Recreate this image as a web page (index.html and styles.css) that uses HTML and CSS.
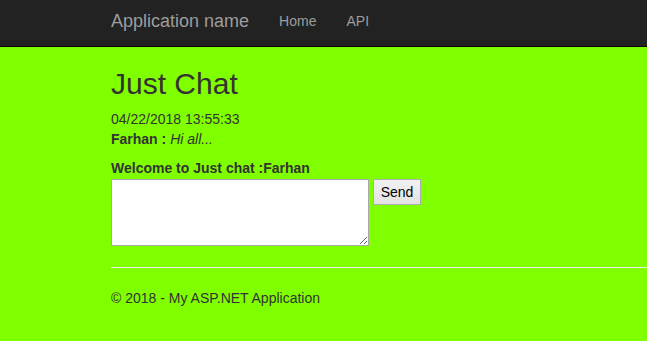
FILE: index.html
```html
<!DOCTYPE html>
<html>
<head>
  <meta charset="utf-8">
  <title>Just Chat - My ASP.NET Application</title>
  <link rel="stylesheet" href="styles.css">
</head>
<body>
  <div class="navbar">
    <div class="container nav-inner">
      <a class="brand" href="#">Application name</a>
      <ul class="nav">
        <li><a href="#">Home</a></li>
        <li><a href="#">API</a></li>
      </ul>
    </div>
  </div>

  <div class="container body-content">
    <h2>Just Chat</h2>

    <div class="messages">
      <div>04/22/2018 13:55:33</div>
      <div><strong>Farhan : </strong><em>Hi all...</em></div>
    </div>

    <div class="compose">
      <label class="welcome">Welcome to Just chat :Farhan</label>
      <div class="compose-row">
        <textarea id="message"></textarea>
        <button id="sendBtn" type="button">Send</button>
      </div>
    </div>

    <hr>
    <footer>
      <p>&copy; 2018 - My ASP.NET Application</p>
    </footer>
  </div>
</body>
</html>
```

FILE: styles.css
```css
body {
  margin: 0;
  padding: 0;
  background-color: #80ff00;
  font-family: "Liberation Sans", Arial, sans-serif;
  font-size: 14px;
  line-height: 1.42857;
  color: #333;
}

.container {
  padding-left: 111px;
}

.navbar {
  background-color: #222;
  border-bottom: 1px solid #080808;
  height: 46px;
}

.nav-inner {
  display: flex;
  align-items: center;
  height: 44px;
}

.brand {
  font-size: 18px;
  color: #9d9d9d;
  text-decoration: none;
  padding-right: 15px;
}

.nav {
  display: flex;
  list-style: none;
  margin: 0;
  padding: 0;
}

.nav a {
  display: block;
  padding: 0 15px;
  color: #9d9d9d;
  text-decoration: none;
}

h2 {
  font-size: 30px;
  font-weight: 500;
  line-height: 1.1;
  margin: 20px 0 10px;
}

.messages {
  margin-bottom: 9px;
}

.welcome {
  display: block;
  font-weight: bold;
  margin-bottom: 0;
}

.compose-row {
  display: flex;
  align-items: flex-start;
  gap: 4px;
}

textarea {
  width: 258px;
  height: 67px;
  box-sizing: border-box;
  margin: 0;
  border: 1px solid #a9a9a9;
  background: #fff;
}

button {
  font-family: "Liberation Sans", Arial, sans-serif;
  font-size: 14px;
  color: #000;
  height: 26px;
  width: 48px;
  padding: 0;
  margin: 0;
  border: 1px solid #adadad;
  background: linear-gradient(#f2f2f2, #e2e2e2);
}

hr {
  margin: 21px 0 21px;
  border: 0;
  border-top: 1px solid #eee;
}

footer p {
  margin: 0 0 10px;
}
```
